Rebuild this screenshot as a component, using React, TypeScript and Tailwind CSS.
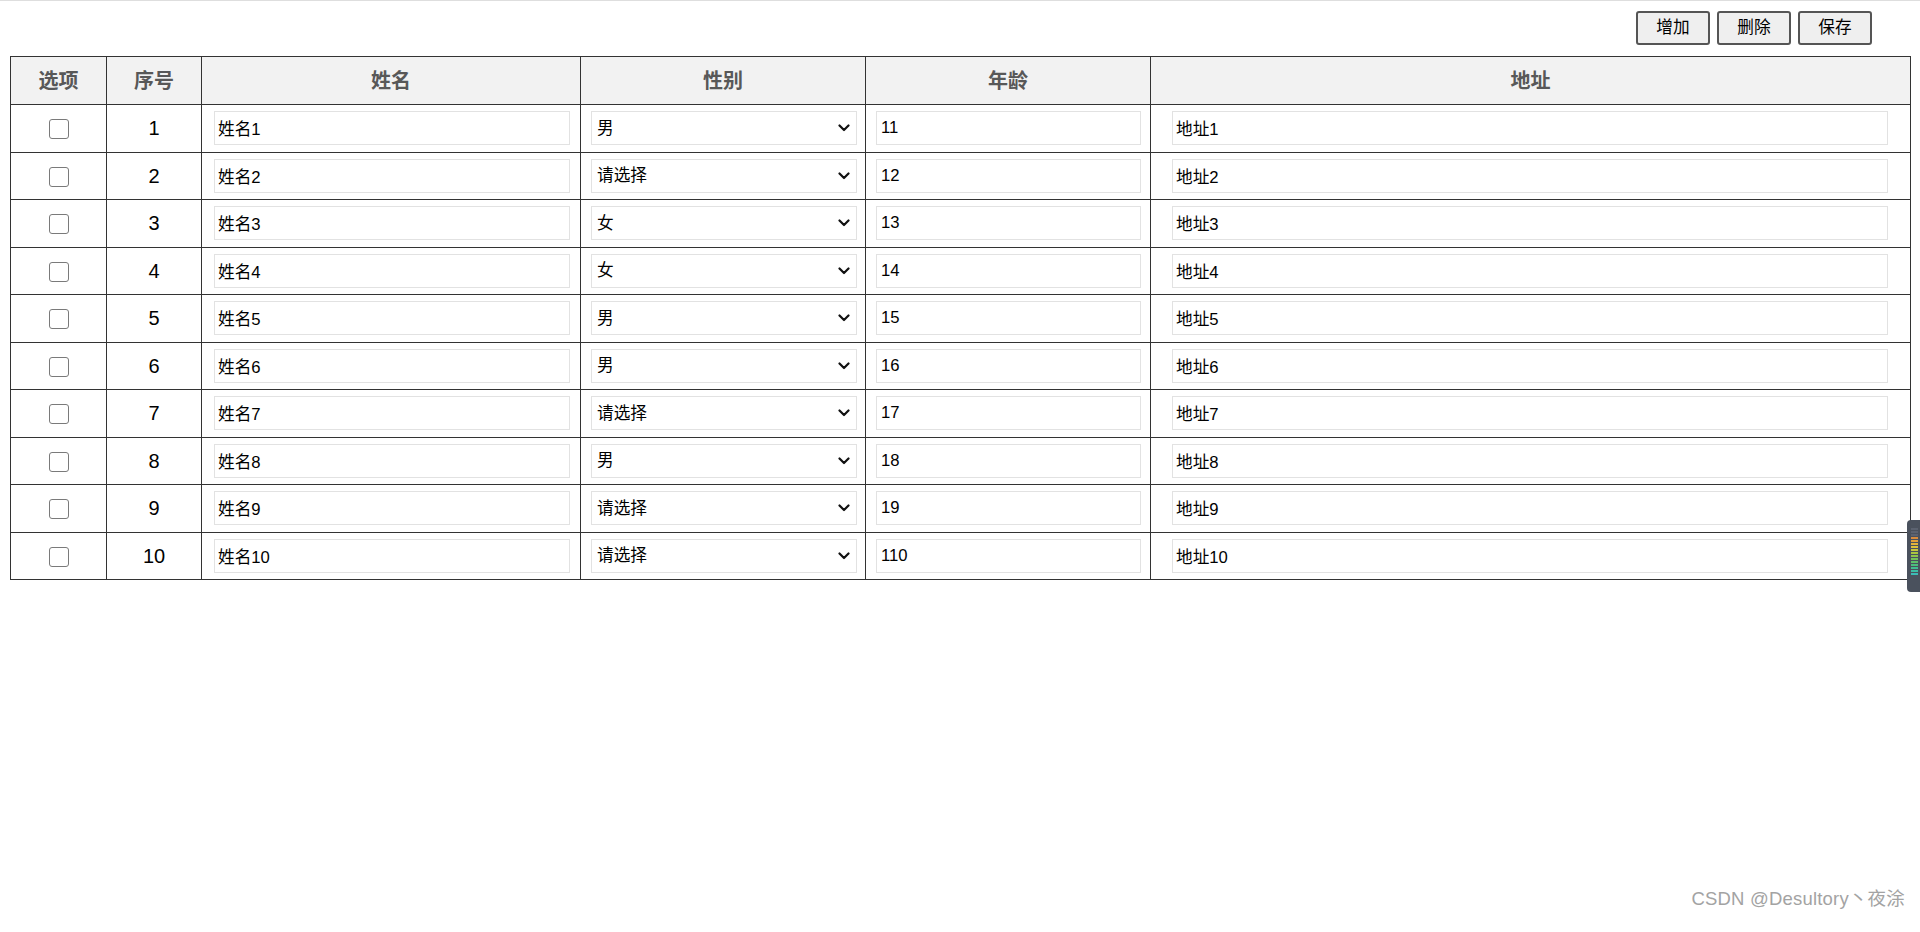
import { useState } from "react";

const rows = [
  { id: 1, sex: "男", age: "11" },
  { id: 2, sex: "请选择", age: "12" },
  { id: 3, sex: "女", age: "13" },
  { id: 4, sex: "女", age: "14" },
  { id: 5, sex: "男", age: "15" },
  { id: 6, sex: "男", age: "16" },
  { id: 7, sex: "请选择", age: "17" },
  { id: 8, sex: "男", age: "18" },
  { id: 9, sex: "请选择", age: "19" },
  { id: 10, sex: "请选择", age: "110" },
];

const font = "font-['Liberation_Sans','Noto_Sans_CJK_SC',sans-serif]";

function Chevron() {
  return (
    <svg className="pointer-events-none absolute right-[7px] top-1/2 -translate-y-1/2" width="12" height="8" viewBox="0 0 12 8">
      <polyline points="1.5,1.5 6,6 10.5,1.5" fill="none" stroke="#111" strokeWidth="2.2" strokeLinecap="round" strokeLinejoin="round" />
    </svg>
  );
}

function Meter() {
  const bars = ["#5b6270", "#5b6270", "#5b6270", "#d98c3c", "#e0a03a", "#e3b43a", "#dcc23c", "#c7c63e", "#abc640", "#8fc44a", "#74c25a", "#5ec06a", "#4cbf7c", "#40be90", "#3ebda4", "#3cbcb6"];
  return (
    <div className="absolute right-0 top-[519px] flex h-[72px] w-[13px] flex-col items-center gap-[1px] rounded-l-[4px] bg-[#4a515d] pt-[8px] pl-[1px]">
      {bars.map((c, i) => (
        <div key={i} className="h-[2px] w-[7px]" style={{ backgroundColor: c }} />
      ))}
    </div>
  );
}

export default function App() {
  const [checked, setChecked] = useState<Record<number, boolean>>({});

  return (
    <div className={`relative h-[932px] w-full overflow-hidden border-t border-[#dedede] bg-white ${font}`}>
      {/* toolbar */}
      <div className="flex justify-end gap-[7px] pr-[48px] pt-[10px]">
        {["增加", "删除", "保存"].map(label => (
          <button key={label} className="h-[34px] w-[74px] rounded-[3px] border-2 border-[#555] bg-[#efefef] text-[16.67px] leading-none text-black">
            {label}
          </button>
        ))}
      </div>

      {/* table */}
      <table className="mx-[10px] mt-[11px] w-[1900px] table-fixed border-collapse border border-[#333]">
        <colgroup>
          <col className="w-[96px]" />
          <col className="w-[95px]" />
          <col className="w-[379px]" />
          <col className="w-[285px]" />
          <col className="w-[285px]" />
          <col className="w-[760px]" />
        </colgroup>
        <thead>
          <tr className="h-[48px] bg-[#f2f2f2]">
            {["选项", "序号", "姓名", "性别", "年龄", "地址"].map(h => (
              <th key={h} className="border border-[#333] p-0 text-center align-middle text-[20px] font-bold text-[#585858]">
                {h}
              </th>
            ))}
          </tr>
        </thead>
        <tbody>
          {rows.map(r => (
            <tr key={r.id} className="h-[47.5px]">
              <td className="border border-[#333] p-0 text-center align-middle">
                <input
                  type="checkbox"
                  checked={!!checked[r.id]}
                  onChange={() => setChecked(p => ({ ...p, [r.id]: !p[r.id] }))}
                  className="h-[20px] w-[20px] appearance-none rounded-[3px] border-[1.5px] border-[#7a7a7a] bg-white align-middle checked:bg-[#0075ff]"
                />
              </td>
              <td className="border border-[#333] p-0 text-center align-middle text-[20px] text-black">{r.id}</td>
              <td className="border border-[#333] p-0 align-middle">
                <input
                  defaultValue={`姓名${r.id}`}
                  className="ml-[12px] block h-[34px] w-[356px] border border-[#e2e2e2] px-[3px] text-[16.67px] text-black outline-none"
                />
              </td>
              <td className="border border-[#333] p-0 align-middle">
                <div className="relative ml-[10px] h-[34px] w-[266px]">
                  <select
                    defaultValue={r.sex}
                    className="block h-full w-full appearance-none border border-[#e2e2e2] bg-white pl-[5px] text-[16.67px] text-black outline-none"
                  >
                    <option value="请选择">请选择</option>
                    <option value="男">男</option>
                    <option value="女">女</option>
                  </select>
                  <Chevron />
                </div>
              </td>
              <td className="border border-[#333] p-0 align-middle">
                <input
                  defaultValue={r.age}
                  className="ml-[10px] block h-[34px] w-[265px] border border-[#e2e2e2] px-[4px] text-[16.67px] text-black outline-none"
                />
              </td>
              <td className="border border-[#333] p-0 align-middle">
                <input
                  defaultValue={`地址${r.id}`}
                  className="ml-[21px] block h-[34px] w-[716px] border border-[#e2e2e2] px-[3px] text-[16.67px] text-black outline-none"
                />
              </td>
            </tr>
          ))}
        </tbody>
      </table>

      <Meter />

      <div className="absolute bottom-[19px] right-[15px] text-[18.5px] tracking-[0.2px] text-[#a3a3a3]">CSDN @Desultory丶夜涂</div>
    </div>
  );
}
